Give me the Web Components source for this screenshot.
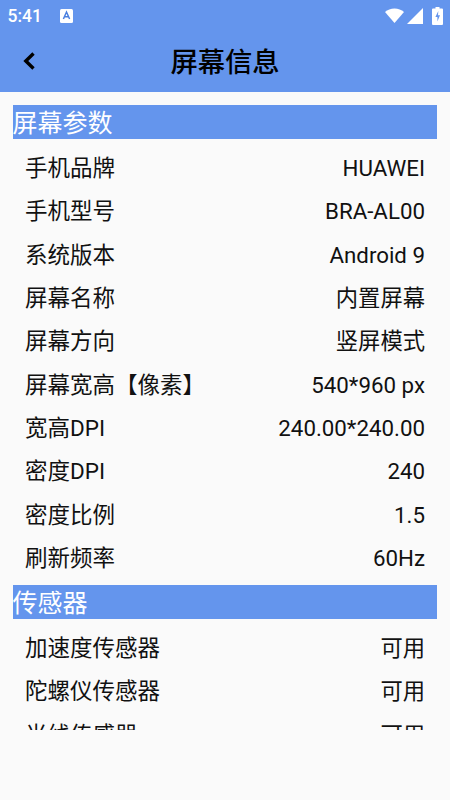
<!DOCTYPE html>
<html lang="zh">
<head>
<meta charset="utf-8">
<title>屏幕信息</title>
<style>
  html, body { margin: 0; padding: 0; height: 100%; background: #fafafa; }
  body { font-family: Roboto, "Noto Sans CJK SC", sans-serif; }
</style>
</head>
<body>
<info-app>
  <app-bar title="屏幕信息"></app-bar>
  <info-section title="屏幕参数">
    <info-row label="手机品牌" value="HUAWEI"></info-row>
    <info-row label="手机型号" value="BRA-AL00"></info-row>
    <info-row label="系统版本" value="Android 9"></info-row>
    <info-row label="屏幕名称" value="内置屏幕"></info-row>
    <info-row label="屏幕方向" value="竖屏模式"></info-row>
    <info-row label="屏幕宽高【像素】" value="540*960 px"></info-row>
    <info-row label="宽高DPI" value="240.00*240.00"></info-row>
    <info-row label="密度DPI" value="240"></info-row>
    <info-row label="密度比例" value="1.5"></info-row>
    <info-row label="刷新频率" value="60Hz"></info-row>
  </info-section>
  <info-section title="传感器">
    <info-row label="加速度传感器" value="可用"></info-row>
    <info-row label="陀螺仪传感器" value="可用"></info-row>
    <info-row label="光线传感器" value="可用"></info-row>
  </info-section>
</info-app>
<script>
class InfoApp extends HTMLElement {
  connectedCallback() {
    this.attachShadow({ mode: 'open' });
    this.shadowRoot.innerHTML = `
      <style>
        :host { display: flex; flex-direction: column; height: 800px; background: #fafafa; }
        .list {
          height: 638px;
          overflow: hidden;
          box-sizing: border-box;
          padding: 13px 13px 0 12.5px;
          display: flex;
          flex-direction: column;
          gap: 4.8px;
        }
      </style>
      <slot name="bar"></slot>
      <div class="list"><slot></slot></div>
    `;
    this.querySelector('app-bar').slot = 'bar';
  }
}
customElements.define('info-app', InfoApp);

class AppBar extends HTMLElement {
  connectedCallback() {
    this.attachShadow({ mode: 'open' });
    this.shadowRoot.innerHTML = `
      <style>
        :host { display: block; height: 92px; background: #6495ed; flex: none; }
        .status {
          height: 31px;
          display: flex;
          align-items: center;
          padding: 0 7px 0 7.5px;
          color: #fff;
          font: 500 17.5px Roboto, sans-serif;
        }
        .badge { margin-left: 18px; display: flex; }
        .icons { margin-left: auto; display: flex; align-items: center; gap: 3px; }
        .title {
          position: relative;
          height: 61px;
          display: flex;
          align-items: center;
          justify-content: center;
        }
        h1 {
          margin: 0;
          font: 500 27.3px "Noto Sans CJK SC", sans-serif;
          color: #000;
          position: relative;
          top: -1.5px;
        }
        .back { position: absolute; left: 22px; top: 20px; display: block; }
      </style>
      <div class="status">
        <span>5:41</span>
        <svg class="badge" width="13" height="14" viewBox="0 0 13 14">
          <rect width="13" height="14" rx="1.5" fill="#fff"/>
          <path d="M3.4 10 6.5 3l3.1 7M4.6 7.8h3.8" fill="none" stroke="#4a7fe0" stroke-width="1.5"/>
        </svg>
        <span class="icons">
          <svg width="19" height="15" viewBox="0 0 19 15"><path d="M0 4C2.6 1.6 5.8.4 9.5.4S16.4 1.6 19 4L9.5 15z" fill="#fff"/></svg>
          <svg width="16" height="16" viewBox="0 0 16 16"><path d="M16 0v16H0z" fill="#fff"/></svg>
          <svg width="11" height="18" viewBox="0 0 11 18" style="margin-left:6px">
            <path d="M3.5 0h4v1.5H10a1 1 0 0 1 1 1V17a1 1 0 0 1-1 1H1a1 1 0 0 1-1-1V2.500a1 1 0 0 1 1-1h2.500z" fill="#fff"/>
            <path d="M6.300 4 3.400 10h2v4.500L8 8.300H6z" fill="#6495ed"/>
          </svg>
        </span>
      </div>
      <div class="title">
        <svg class="back" width="14" height="20" viewBox="0 0 14 20">
          <path d="M11.5 2.500 3.800 10 11.500 17.500" fill="none" stroke="#000" stroke-width="3.400"/>
        </svg>
        <h1>${this.getAttribute('title')}</h1>
      </div>
    `;
  }
}
customElements.define('app-bar', AppBar);

class InfoSection extends HTMLElement {
  connectedCallback() {
    this.attachShadow({ mode: 'open' });
    this.shadowRoot.innerHTML = `
      <style>
        :host { display: block; flex: none; }
        .head {
          height: 34px;
          background: #6495ed;
          color: #fff;
          font: 400 25px/32px "Noto Sans CJK SC", sans-serif;
          margin-bottom: 8px;
        }
      </style>
      <div class="head">${this.getAttribute('title')}</div>
      <slot></slot>
    `;
  }
}
customElements.define('info-section', InfoSection);

class InfoRow extends HTMLElement {
  connectedCallback() {
    this.attachShadow({ mode: 'open' });
    this.shadowRoot.innerHTML = `
      <style>
        :host {
          display: flex;
          justify-content: space-between;
          align-items: center;
          height: 43.33px;
          padding: 0 12px 0 12.5px;
          color: #111;
          font: 400 22.5px/43.33px Roboto, "Noto Sans CJK SC", sans-serif;
        }
        .value { font-size: 22.3px; }
      </style>
      <span>${this.getAttribute('label')}</span>
      <span class="value">${this.getAttribute('value')}</span>
    `;
  }
}
customElements.define('info-row', InfoRow);
</script>
</body>
</html>
